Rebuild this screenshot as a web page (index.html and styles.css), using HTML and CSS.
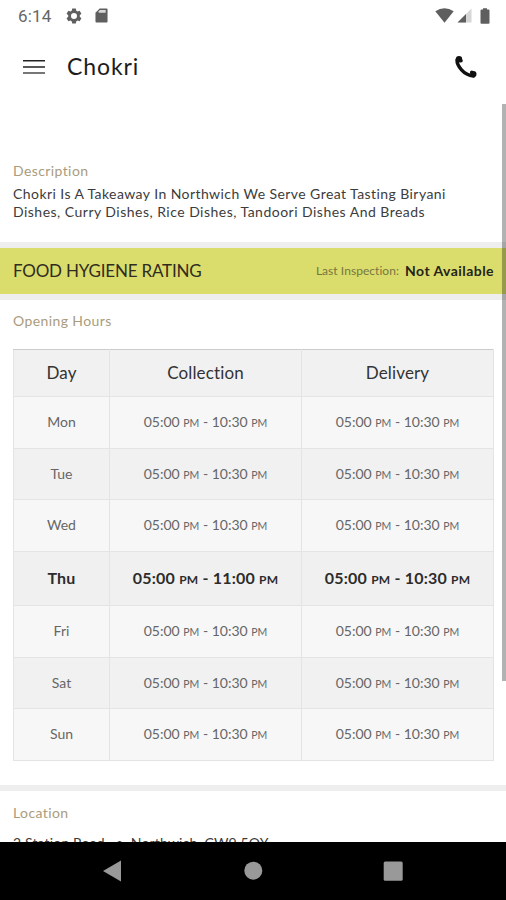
FILE: index.html
```html
<!DOCTYPE html>
<html lang="en">
<head>
<meta charset="UTF-8">
<meta name="viewport" content="width=device-width, initial-scale=1.0">
<title>Chokri</title>
<link rel="stylesheet" href="styles.css">
</head>
<body>
<div class="status-bar">
  <span class="clock">6:14</span>
  <svg class="gear" width="20" height="20" viewBox="0 0 24 24"><path fill="#5f5f5f" fill-rule="evenodd" d="M9.6 2h4.8l.5 2.8 1.9 1.1 2.7-1 2.4 4.1-2.2 1.9v2.2l2.2 1.9-2.4 4.1-2.7-1-1.9 1.1-.5 2.8H9.6l-.5-2.8-1.9-1.1-2.7 1L2.1 15l2.2-1.9v-2.2L2.1 9l2.4-4.1 2.7 1 1.9-1.1zM12 8a4 4 0 1 0 0 8 4 4 0 0 0 0-8z"/></svg>
  <svg class="sd" width="13" height="15" viewBox="0 0 14 16"><path fill="#5f5f5f" d="M5 .5h7.500q1 0 1 1v13q0 1-1 1h-11q-1 0-1-1V5z"/><path fill="#d8d8d8" d="M5.300 2h6.200v3H4V3.300z"/></svg>
  <div class="signals">
    <svg width="19" height="15" viewBox="0 0 19 15"><path fill="#5f5f5f" d="M.3 3.200Q9.500-2.600 18.700 3.200L9.500 14.800z"/></svg>
    <svg width="15" height="15" viewBox="0 0 15 15"><path fill="#d6d6d6" d="M14.500.5v14H.5z"/><path fill="#5f5f5f" d="M9 6v8.500H.5z"/></svg>
    <svg width="10" height="16" viewBox="0 0 10 16"><path fill="#5f5f5f" d="M3 .3h4v1.200h1.500q1 0 1 1V15q0 .8-1 .8h-7q-1 0-1-.8V2.500q0-1 1-1H3z"/></svg>
  </div>
</div>

<header class="app-bar">
  <svg class="menu" width="22" height="16" viewBox="0 0 22 16"><path fill="#222" d="M0 1h22v1.500H0zM0 7.200h22v1.500H0z"/><path fill="#777" d="M0 13h22v2H0z"/></svg>
  <h1>Chokri</h1>
  <svg class="phone" width="24" height="24" viewBox="0 0 24 24"><path fill="none" stroke="#111" stroke-width="3.400" stroke-linecap="round" d="M3 5Q2.800 9.500 7.500 14.800T19.500 21"/><circle cx="5" cy="4.300" r="3.200" fill="#111"/><circle cx="7" cy="5.700" r="1.800" fill="#111"/><circle cx="19.300" cy="19.100" r="3.200" fill="#111"/><circle cx="17.800" cy="17.200" r="1.800" fill="#111"/></svg>
</header>

<main class="page">
  <section class="description">
    <h2>Description</h2>
    <p><span class="line-one">Chokri Is A Takeaway In Northwich We Serve Great Tasting Biryani</span><br><span class="line-two">Dishes, Curry Dishes, Rice Dishes, Tandoori Dishes And Breads</span></p>
  </section>

  <section class="hygiene">
    <span class="hygiene-title">FOOD HYGIENE RATING</span>
    <span class="inspection">Last Inspection:</span>
    <span class="result">Not Available</span>
  </section>

  <section class="opening">
    <h2>Opening Hours</h2>
    <table class="hours">
      <tr class="head"><th>Day</th><th>Collection</th><th>Delivery</th></tr>
      <tr><td>Mon</td><td>05:00 <small>PM</small> - 10:30 <small>PM</small></td><td>05:00 <small>PM</small> - 10:30 <small>PM</small></td></tr>
      <tr class="shade"><td>Tue</td><td>05:00 <small>PM</small> - 10:30 <small>PM</small></td><td>05:00 <small>PM</small> - 10:30 <small>PM</small></td></tr>
      <tr><td>Wed</td><td>05:00 <small>PM</small> - 10:30 <small>PM</small></td><td>05:00 <small>PM</small> - 10:30 <small>PM</small></td></tr>
      <tr class="today"><td>Thu</td><td>05:00 <small>PM</small> - 11:00 <small>PM</small></td><td>05:00 <small>PM</small> - 10:30 <small>PM</small></td></tr>
      <tr><td>Fri</td><td>05:00 <small>PM</small> - 10:30 <small>PM</small></td><td>05:00 <small>PM</small> - 10:30 <small>PM</small></td></tr>
      <tr class="shade"><td>Sat</td><td>05:00 <small>PM</small> - 10:30 <small>PM</small></td><td>05:00 <small>PM</small> - 10:30 <small>PM</small></td></tr>
      <tr><td>Sun</td><td>05:00 <small>PM</small> - 10:30 <small>PM</small></td><td>05:00 <small>PM</small> - 10:30 <small>PM</small></td></tr>
    </table>
  </section>

  <section class="location">
    <h2>Location</h2>
    <p>2 Station Road, &nbsp;•, Northwich, CW9 5QY</p>
  </section>
  <div class="scrollbar"></div>
</main>

<nav class="nav-bar">
  <svg width="506" height="58" viewBox="0 0 506 58"><path fill="#999" d="M103 29l18-10.500v21z"/><circle fill="#999" cx="253.300" cy="28.700" r="9"/><rect fill="#999" x="383.700" y="19.500" width="19" height="19.300" rx="1.500"/></svg>
</nav>
</body>
</html>
```
FILE: styles.css
```css
* {
  margin: 0;
  padding: 0;
  box-sizing: border-box;
}

body {
  display: flex;
  flex-direction: column;
  height: 900px;
  overflow: hidden;
  background: #fff;
  color: #3c3c3c;
  font-family: Lato, sans-serif;
  font-variant-ligatures: none;
}

svg {
  display: block;
  flex: none;
}

.status-bar {
  display: flex;
  align-items: center;
  height: 31px;
  padding: 0 16px 0 18px;
  color: #666;
}

.clock {
  width: 47px;
  font: 17px Roboto, sans-serif;
  letter-spacing: 0.2px;
}

.gear {
  width: 18px;
  height: 18px;
}

.sd {
  margin-left: 12px;
}

.signals {
  display: flex;
  align-items: center;
  margin-left: auto;
}

.signals svg:nth-child(2) {
  margin-left: 3px;
}

.signals svg:nth-child(3) {
  margin-left: 8px;
}

.app-bar {
  display: flex;
  align-items: center;
  height: 72px;
  padding: 0 28px 0 23px;
}

.app-bar h1 {
  margin: -3px 0 0 22px;
  font-size: 23px;
  font-weight: 400;
  letter-spacing: 0.9px;
  color: #1c1c1c;
}

.phone {
  margin-left: auto;
}

.page {
  position: relative;
  height: 739px;
  overflow: hidden;
}

h2 {
  font-size: 14px;
  font-weight: 400;
  line-height: 18px;
  letter-spacing: 0.4px;
  color: #aa9c7c;
}

.description {
  height: 139px;
  padding: 59px 13px 0;
}

.description p {
  margin-top: 5px;
  font-size: 14px;
  line-height: 18px;
}

.line-one {
  letter-spacing: 0.43px;
}

.line-two {
  letter-spacing: 0.48px;
}

.hygiene {
  display: flex;
  align-items: center;
  height: 58px;
  padding: 0 12px 2px 13px;
  border-top: 6px solid #eee;
  border-bottom: 6px solid #eee;
  background: #dadd6c;
}

.hygiene-title {
  font-size: 17px;
  letter-spacing: -0.2px;
  color: #302c20;
}

.inspection {
  margin-left: auto;
  font-size: 12px;
  letter-spacing: 0.05px;
  color: #77763f;
}

.result {
  margin-left: 6px;
  font-size: 14px;
  font-weight: 700;
  letter-spacing: 0.45px;
  color: #25231a;
}

.opening {
  height: 491px;
  padding: 12px 12px 0 13px;
  border-bottom: 6px solid #eee;
}

.hours {
  width: 481px;
  margin-top: 19px;
  border-collapse: collapse;
  table-layout: fixed;
  text-align: center;
}

.hours th,
.hours td {
  height: 51.5px;
  padding-bottom: 1px;
  border: 1px solid #e4e4e4;
  background: #f7f7f7;
  font-size: 14px;
  color: #666;
}

.hours th {
  height: 47px;
  padding-bottom: 2px;
  border-top-color: #ccc;
  background: #f1f1f1;
  font-size: 17px;
  font-weight: 400;
  letter-spacing: 0.15px;
  color: #333;
}

.hours th:first-child {
  width: 96px;
}

.hours .shade td {
  background: #f1f1f1;
}

.hours .today td {
  height: 54.5px;
  background: #f0f0f0;
  font-size: 16px;
  font-weight: 700;
  letter-spacing: 0.2px;
  color: #2c2c2c;
}

.hours small {
  font-size: 0.75em;
}

.location {
  padding: 13px 13px 0;
}

.location p {
  margin-top: 12px;
  font-size: 14px;
  line-height: 18px;
  letter-spacing: 0.15px;
  white-space: nowrap;
}

.scrollbar {
  position: absolute;
  top: 1px;
  right: 0;
  width: 4px;
  height: 577px;
  background: rgba(0, 0, 0, 0.3);
}

.nav-bar {
  height: 58px;
  background: #000;
}
```
